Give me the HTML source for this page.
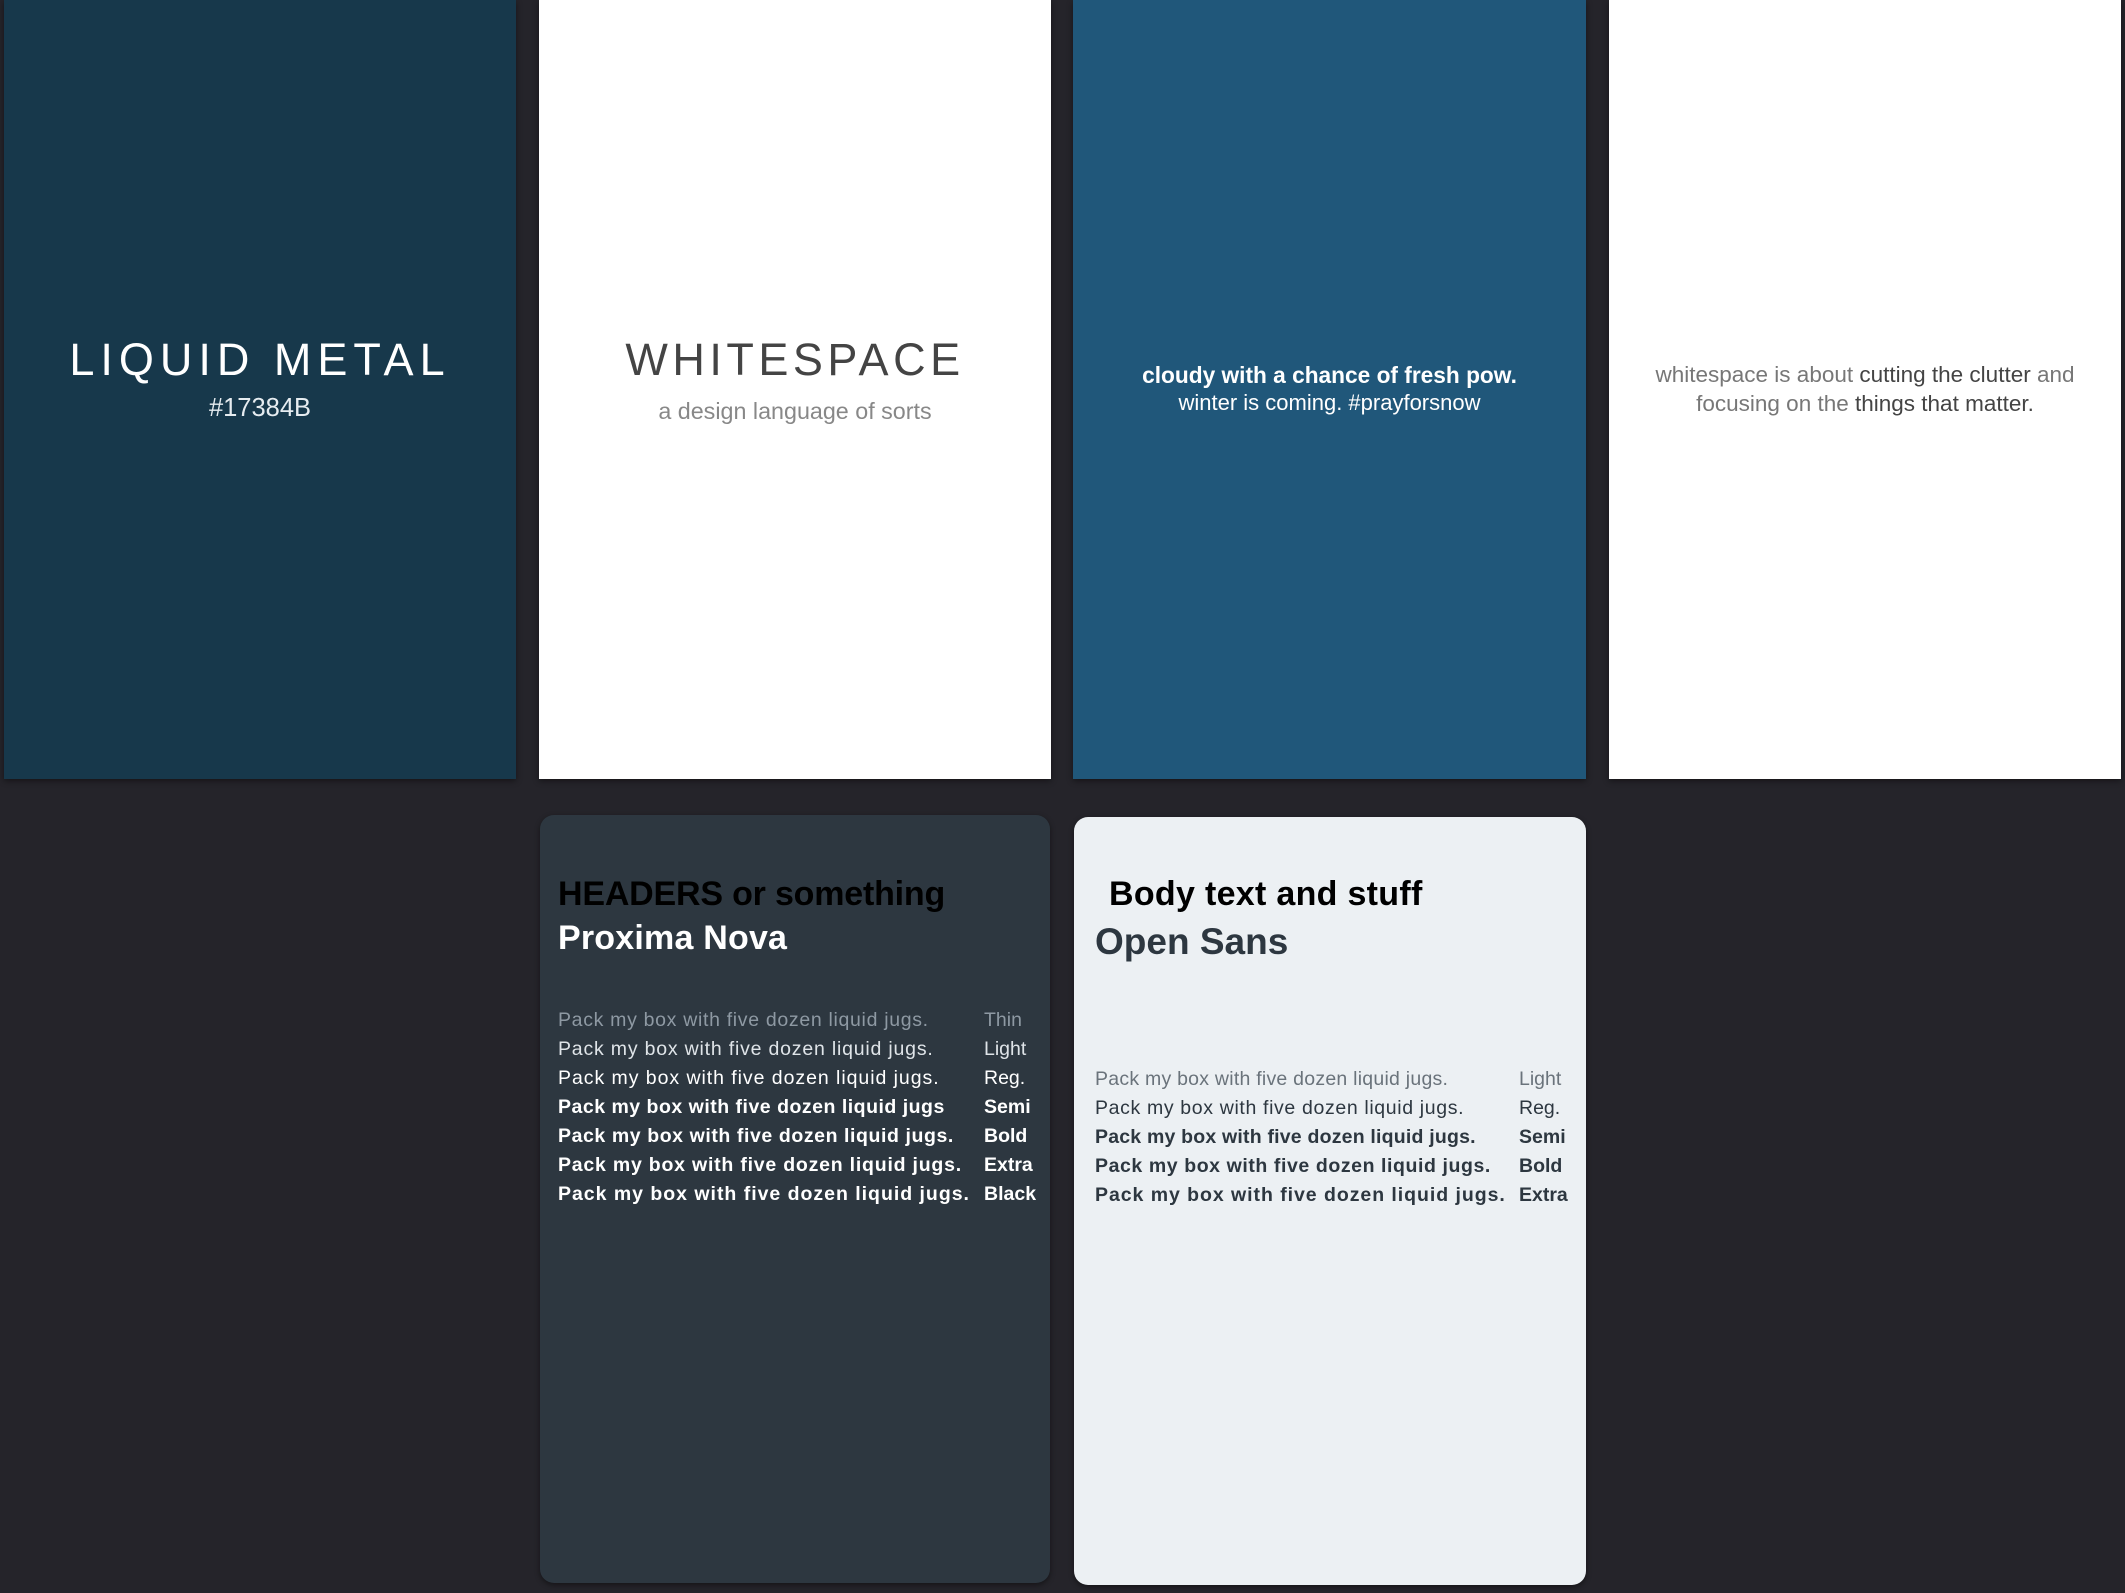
<!DOCTYPE html>
<html><head><meta charset="utf-8"><style>
*{margin:0;padding:0;box-sizing:border-box}
body{width:2125px;height:1593px;background:#25242a;position:relative;overflow:hidden;font-family:"Liberation Sans",sans-serif}
.c{position:absolute;box-shadow:0 2px 6px rgba(0,0,0,.45)}
.t{position:absolute;white-space:nowrap}
.ctr{left:0;right:0;text-align:center}
.row{position:absolute;font-size:19.5px;line-height:29px;white-space:nowrap}
</style></head><body>
<div class="c" style="left:4px;top:0;width:512px;height:779px;background:#17384b">
 <div class="t ctr" style="top:334px;font-size:45px;letter-spacing:6px;color:#fff;font-weight:300">LIQUID METAL</div>
 <div class="t ctr" style="top:394px;font-size:25.5px;color:#e6ecf0">#17384B</div>
</div>
<div class="c" style="left:539px;top:0;width:512px;height:779px;background:#fff">
 <div class="t ctr" style="top:334px;font-size:45px;letter-spacing:4.5px;color:#444">WHITESPACE</div>
 <div class="t ctr" style="top:398px;font-size:23.3px;color:#888">a design language of sorts</div>
</div>
<div class="c" style="left:1073px;top:0;width:513px;height:779px;background:#20577a">
 <div class="t ctr" style="top:362px;font-size:22.7px;font-weight:bold;color:#fff">cloudy with a chance of fresh pow.</div>
 <div class="t ctr" style="top:390px;font-size:22px;color:#fff">winter is coming. #prayforsnow</div>
</div>
<div class="c" style="left:1609px;top:0;width:512px;height:779px;background:#fff">
 <div class="t ctr" style="top:360px;font-size:22.5px;line-height:29px;color:#777">whitespace is about <span style="color:#444">cutting the clutter</span> and<br>focusing on the <span style="color:#444">things that matter.</span></div>
</div>
<div class="c" style="left:540px;top:815px;width:510px;height:768px;background:#2d3740;border-radius:14px">
 <div class="t" style="left:18px;top:60px;font-size:34px;font-weight:bold;color:#000;letter-spacing:-0.2px">HEADERS <span style="font-weight:600">or something</span></div>
 <div class="t" style="left:18px;top:104px;font-size:34px;font-weight:bold;color:#fff;letter-spacing:0.2px">Proxima Nova</div>
 <div class="row" style="left:18px;top:191px;color:#fff">
  <div style="color:#8e99a3;letter-spacing:0.68px">Pack my box with five dozen liquid jugs.</div>
  <div style="color:#dfe4e8;letter-spacing:0.8px">Pack my box with five dozen liquid jugs.</div>
  <div style="letter-spacing:0.95px">Pack my box with five dozen liquid jugs.</div>
  <div style="font-weight:bold;letter-spacing:0.5px">Pack my box with five dozen liquid jugs</div>
  <div style="font-weight:bold;letter-spacing:0.58px">Pack my box with five dozen liquid jugs.</div>
  <div style="font-weight:bold;letter-spacing:0.78px">Pack my box with five dozen liquid jugs.</div>
  <div style="font-weight:bold;letter-spacing:0.98px">Pack my box with five dozen liquid jugs.</div>
 </div>
 <div class="row" style="left:444px;top:191px;color:#fff">
  <div style="color:#8e99a3">Thin</div><div style="color:#dfe4e8">Light</div><div>Reg.</div><div style="font-weight:bold">Semi</div><div style="font-weight:bold">Bold</div><div style="font-weight:bold">Extra</div><div style="font-weight:bold">Black</div>
 </div>
</div>
<div class="c" style="left:1074px;top:817px;width:512px;height:768px;background:#ecf0f3;border-radius:14px">
 <div class="t" style="left:35px;top:58px;font-size:34px;font-weight:bold;color:#000;letter-spacing:0.3px">Body text and stuff</div>
 <div class="t" style="left:21px;top:104px;font-size:37px;font-weight:bold;color:#2d3740">Open Sans</div>
 <div class="row" style="left:21px;top:248px;color:#2d3740">
  <div style="color:#6a737b;letter-spacing:0.24px">Pack my box with five dozen liquid jugs.</div>
  <div style="letter-spacing:0.64px">Pack my box with five dozen liquid jugs.</div>
  <div style="font-weight:bold;letter-spacing:0.2px">Pack my box with five dozen liquid jugs.</div>
  <div style="font-weight:bold;letter-spacing:0.58px">Pack my box with five dozen liquid jugs.</div>
  <div style="font-weight:bold;letter-spacing:0.95px">Pack my box with five dozen liquid jugs.</div>
 </div>
 <div class="row" style="left:445px;top:248px;color:#2d3740">
  <div style="color:#6a737b">Light</div><div>Reg.</div><div style="font-weight:bold">Semi</div><div style="font-weight:bold">Bold</div><div style="font-weight:bold">Extra</div>
 </div>
</div>
<div></div>
</body></html>
